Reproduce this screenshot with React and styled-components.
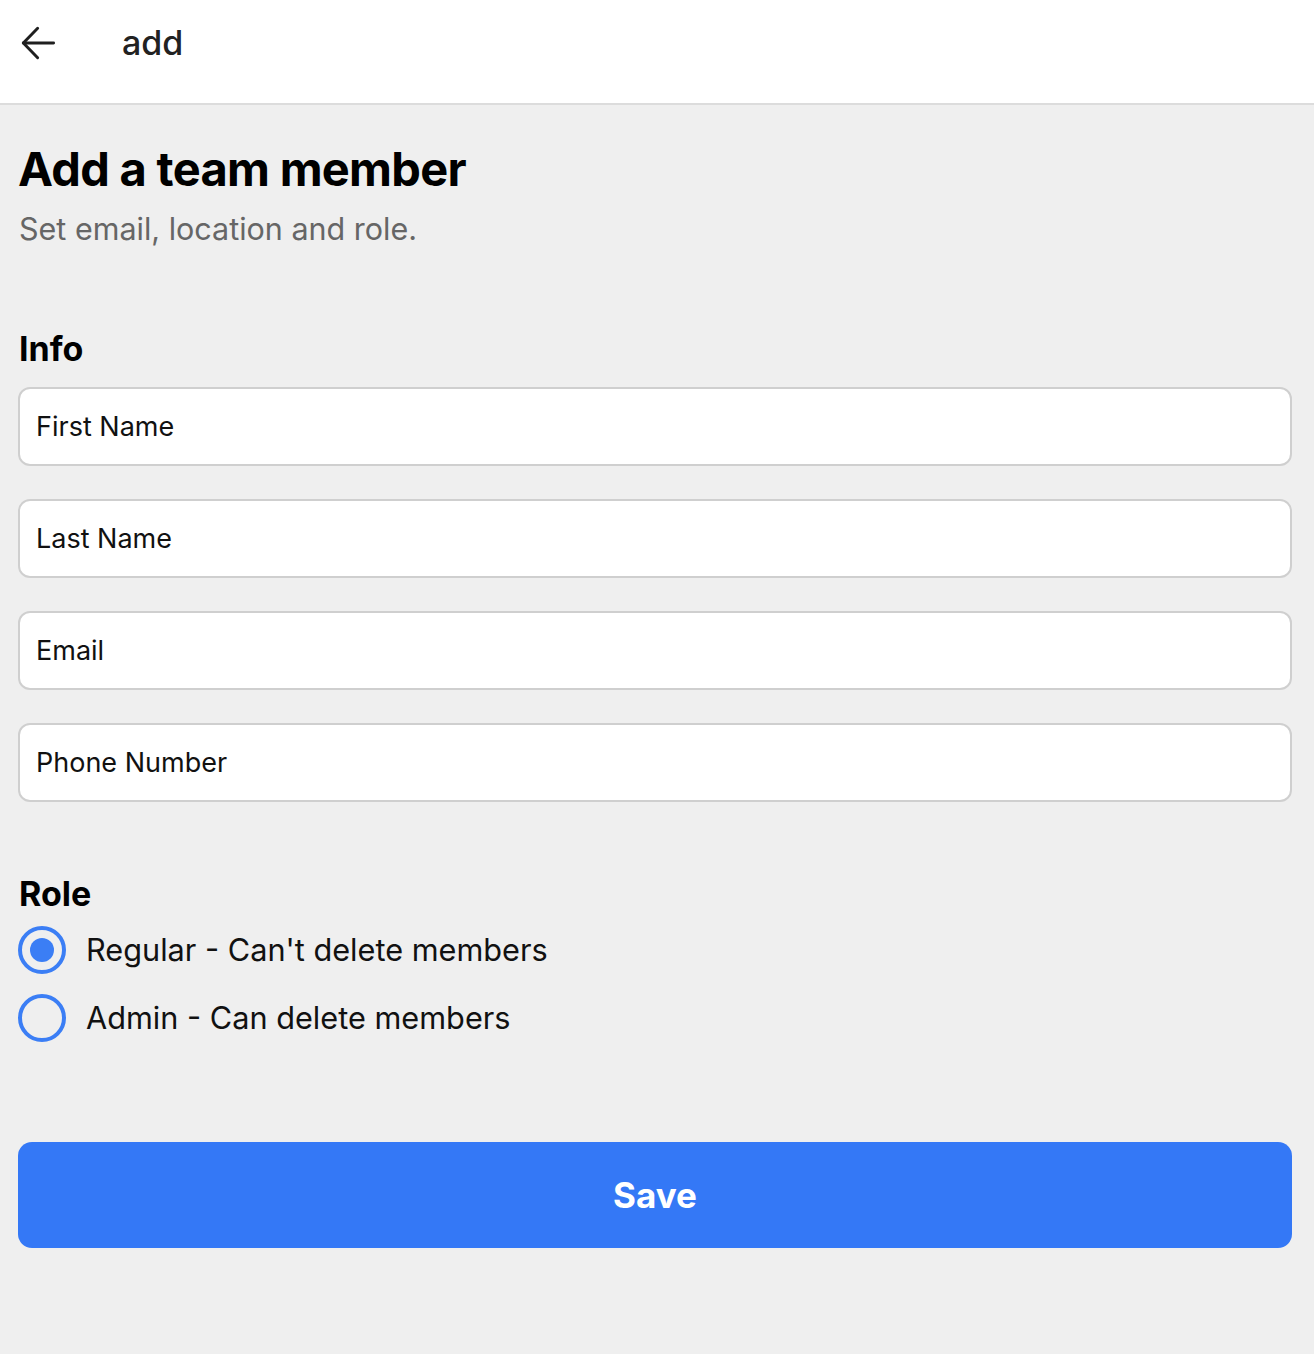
import { useState } from "react";
import styled, { createGlobalStyle } from "styled-components";

const GlobalStyle = createGlobalStyle`
  body {
    margin: 0;
    background: #efefef;
    font-family: Inter, "Noto Sans", sans-serif;
  }
`;

const fields = ["First Name", "Last Name", "Email", "Phone Number"];

const roles = [
  { id: "regular", label: "Regular - Can't delete members" },
  { id: "admin", label: "Admin - Can delete members" },
];

const App = () => {
  const [role, setRole] = useState("regular");

  return (
    <>
      <GlobalStyle />
      <Header>
        <BackButton aria-label="back">
          <svg width="44" height="44" viewBox="0 0 24 24" fill="none" stroke="#1f1f1f" strokeWidth="1.6" strokeLinecap="round" strokeLinejoin="round">
            <path d="M20.5 12H4" />
            <path d="M11.8 4 4 12l7.8 8" />
          </svg>
        </BackButton>
        <HeaderTitle>add</HeaderTitle>
      </Header>

      <Main>
        <Title>Add a team member</Title>
        <Subtitle>Set email, location and role.</Subtitle>

        <SectionTitle>Info</SectionTitle>
        <Fields>
          {fields.map((f) => (
            <Input key={f} placeholder={f} />
          ))}
        </Fields>

        <SectionTitle $tight>Role</SectionTitle>
        <Radios>
          {roles.map((r) => (
            <RadioRow key={r.id} onClick={() => setRole(r.id)}>
              <RadioCircle $checked={role === r.id} />
              <span>{r.label}</span>
            </RadioRow>
          ))}
        </Radios>

        <SaveButton>Save</SaveButton>
      </Main>
    </>
  );
};

export default App;

const Header = styled.header`
  height: 103px;
  background: #fff;
  border-bottom: 2px solid #dcdcdc;
  display: flex;
  align-items: center;
  padding: 0 16px;
`;

const BackButton = styled.button`
  background: none;
  border: none;
  padding: 0;
  width: 44px;
  height: 44px;
  display: flex;
  align-items: center;
  justify-content: center;
  margin-top: -18px;
  cursor: pointer;
`;

const HeaderTitle = styled.h1`
  margin: -18px 0 0 62px;
  font-size: 34px;
  font-weight: 500;
  color: #222;
`;

const Main = styled.main`
  padding: 36px 22px 80px 18px;
`;

const Title = styled.h2`
  margin: 0;
  font-size: 47px;
  font-weight: 700;
  letter-spacing: -0.7px;
  color: #000;
  line-height: 1.2;
`;

const Subtitle = styled.p`
  margin: 14px 0 0 1px;
  font-size: 30.5px;
  color: #666;
  line-height: 1.2;
`;

const SectionTitle = styled.h3`
  margin: ${({ $tight }) => ($tight ? "72px 0 11px 1px" : "81px 0 17px 1px")};
  font-size: 34px;
  font-weight: 700;
  color: #000;
  line-height: 1.2;
`;

const Fields = styled.div`
  display: flex;
  flex-direction: column;
  gap: 33px;
`;

const Input = styled.input`
  box-sizing: border-box;
  height: 79px;
  width: 100%;
  padding: 0 16px;
  border: 2px solid #cfcfcf;
  border-radius: 12px;
  background: #fff;
  font-family: inherit;
  font-size: 27px;
  outline: none;

  &::placeholder {
    color: #111;
  }
`;

const Radios = styled.div`
  display: flex;
  flex-direction: column;
  gap: 20px;
`;

const RadioRow = styled.label`
  display: flex;
  align-items: center;
  gap: 20px;
  font-size: 30.7px;
  color: #111;
  cursor: pointer;
`;

const RadioCircle = styled.span`
  box-sizing: border-box;
  width: 48px;
  height: 48px;
  border-radius: 50%;
  border: 4px solid #3b7ef5;
  display: flex;
  align-items: center;
  justify-content: center;

  &::after {
    content: "";
    width: 24px;
    height: 24px;
    border-radius: 50%;
    background: ${({ $checked }) => ($checked ? "#3b7ef5" : "transparent")};
  }
`;

const SaveButton = styled.button`
  margin-top: 100px;
  width: 100%;
  height: 106px;
  border: none;
  border-radius: 14px;
  background: #3478f6;
  color: #fff;
  font-family: inherit;
  font-size: 35px;
  font-weight: 700;
  cursor: pointer;
`;
